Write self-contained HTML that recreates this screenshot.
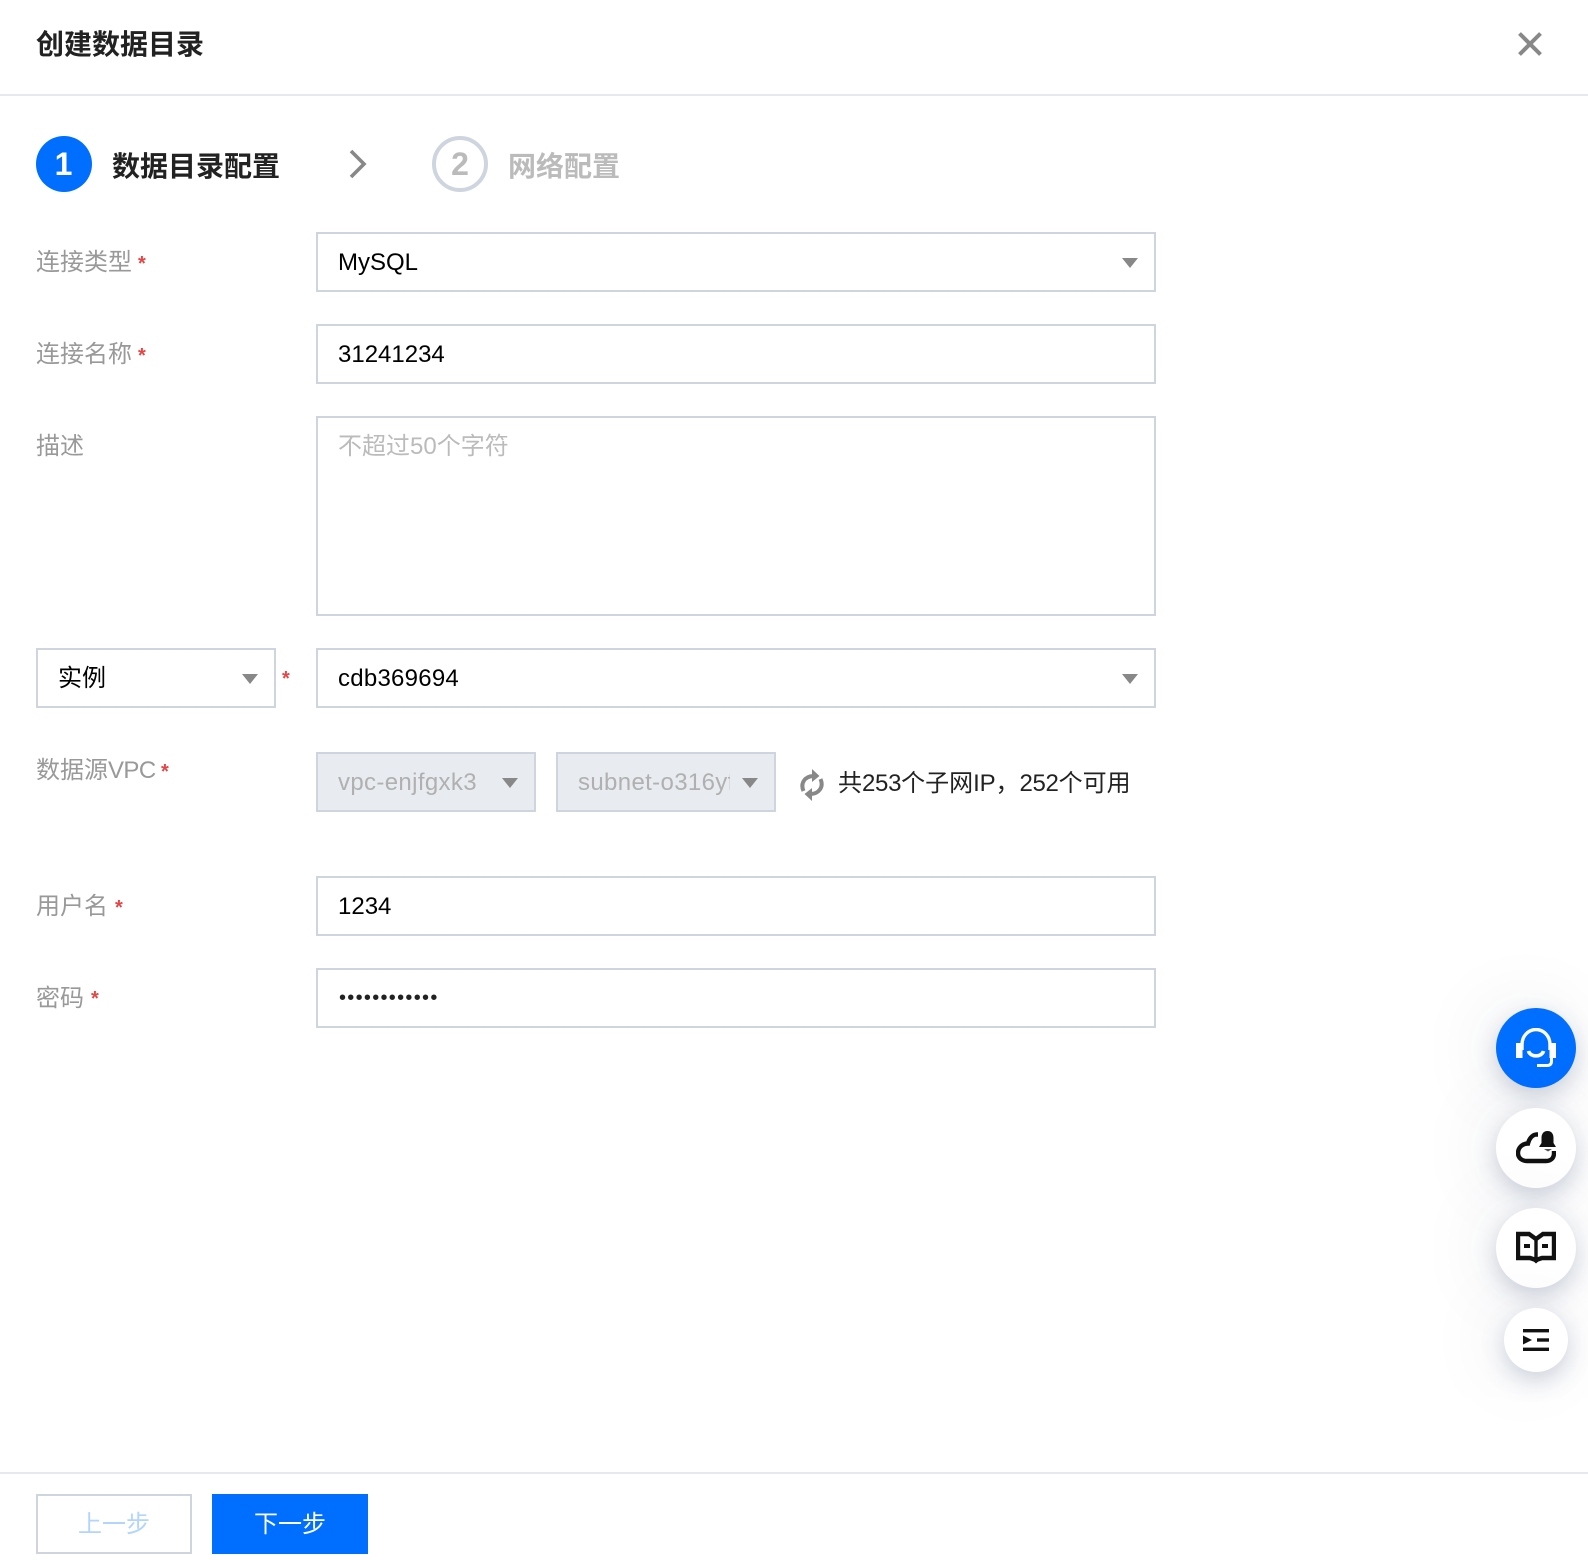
<!DOCTYPE html>
<html lang="zh-CN">
<head>
<meta charset="utf-8">
<title>创建数据目录</title>
<style>
html,body{margin:0;padding:0;background:#fff}
body{width:1588px;height:1560px;position:relative;overflow:hidden;font-family:"Liberation Sans","Noto Sans CJK SC",sans-serif;font-size:24px;color:#000}
.a{position:absolute;white-space:nowrap}
.box{position:absolute;box-sizing:border-box;border:2px solid #cfd5de;background:#fff;height:60px;left:316px;width:840px}
.txt{position:absolute;left:338px;line-height:36px;height:36px;white-space:nowrap}
.lab{position:absolute;left:36px;line-height:36px;color:#999;white-space:nowrap}
.star{position:absolute;color:#e54545;font-size:20px;line-height:24px;font-weight:bold}
.arr{position:absolute;width:0;height:0;border-left:8px solid transparent;border-right:8px solid transparent;border-top:10px solid #888}
.b{font-weight:bold;font-size:28px;line-height:40px}
.fab{position:absolute;border-radius:50%;background:#fff;box-shadow:0 8px 24px rgba(40,60,100,.22),-10px 0 80px rgba(40,60,100,.09)}
</style>
</head>
<body>
<div class="a b" style="left:36px;top:25px;color:#222">创建数据目录</div>
<svg class="a" style="left:1517px;top:31px" width="26" height="26" viewBox="0 0 26 26"><path d="M2.500 2.500L23.500 23.500M23.500 2.500L2.500 23.500" stroke="#888" stroke-width="4" fill="none"/></svg>
<div class="a" style="left:0;top:94px;width:1588px;height:2px;background:#e5e8ed"></div>

<div class="a" style="left:36px;top:136px;width:56px;height:56px;border-radius:50%;background:#006eff;color:#fff;font-weight:bold;font-size:32px;line-height:56px;text-align:center;text-indent:-1px">1</div>
<div class="a b" style="left:112px;top:147px;color:#222">数据目录配置</div>
<svg class="a" style="left:347px;top:148px" width="24" height="32" viewBox="0 0 24 32"><path d="M4 3L17 16L4 29" stroke="#888" stroke-width="3.600" fill="none"/></svg>
<div class="a" style="left:432px;top:136px;width:56px;height:56px;box-sizing:border-box;border:4px solid #cfd5de;border-radius:50%;color:#bbb;font-weight:bold;font-size:32px;line-height:48px;text-align:center">2</div>
<div class="a b" style="left:508px;top:147px;color:#bbb">网络配置</div>

<div class="lab" style="top:245px">连接类型</div><div class="star" style="left:138px;top:252px">*</div>
<div class="box" style="top:232px"></div><div class="txt" style="top:245px">MySQL</div>
<div class="arr" style="left:1122px;top:258px"></div>

<div class="lab" style="top:337px">连接名称</div><div class="star" style="left:138px;top:344px">*</div>
<div class="box" style="top:324px"></div><div class="txt" style="top:337px">31241234</div>

<div class="lab" style="top:429px">描述</div>
<div class="box" style="top:416px;height:200px"></div><div class="txt" style="top:429px;color:#bbb">不超过50个字符</div>

<div class="box" style="top:648px;left:36px;width:240px"></div><div class="txt" style="top:661px;left:58px">实例</div>
<div class="arr" style="left:242px;top:674px"></div>
<div class="star" style="left:282px;top:667px">*</div>
<div class="box" style="top:648px"></div><div class="txt" style="top:661px;letter-spacing:.25px">cdb369694</div>
<div class="arr" style="left:1122px;top:674px"></div>

<div class="lab" style="top:753px">数据源<span style="letter-spacing:-.6px">VPC</span></div><div class="star" style="left:161px;top:760px">*</div>
<div class="box" style="top:752px;width:220px;background:#e8ebf0"></div>
<div class="txt" style="top:765px;color:#b0b0b0;letter-spacing:.35px">vpc-enjfgxk3</div>
<div class="arr" style="left:502px;top:778px"></div>
<div class="box" style="top:752px;left:556px;width:220px;background:#e8ebf0"></div>
<div class="txt" style="top:765px;left:578px;width:152px;overflow:hidden;color:#b0b0b0;letter-spacing:.35px">subnet-o316yfxx</div>
<div class="arr" style="left:742px;top:778px"></div>
<svg class="a" style="left:800px;top:769px" width="24" height="32" viewBox="0 0 24 32"><g fill="none" stroke="#888" stroke-width="4"><path d="M3.500 22C0 14 5 7.500 13 7"/><path d="M20.500 10C24 18 19 24.500 11 25"/></g><path d="M12 0L19.500 7L12 13Z" fill="#888"/><path d="M12 32L4.500 25L12 19Z" fill="#888"/></svg>
<div class="a" style="left:838px;top:766px;line-height:36px;color:#222"><span>共</span><span style="letter-spacing:-.3px">253</span>个子网<span style="letter-spacing:-.2px">IP</span>，<span style="letter-spacing:-.3px">252</span>个可用</div>

<div class="lab" style="top:889px">用户名</div><div class="star" style="left:115px;top:896px">*</div>
<div class="box" style="top:876px"></div><div class="txt" style="top:889px">1234</div>

<div class="lab" style="top:981px">密码</div><div class="star" style="left:91px;top:987px">*</div>
<div class="box" style="top:968px"></div><div class="txt" style="top:980px;left:339px;font-size:20px;letter-spacing:1.300px;color:#222">••••••••••••</div>

<div class="a" style="left:0;top:1472px;width:1588px;height:2px;background:#e5e8ed"></div>
<div class="a" style="left:36px;top:1494px;width:156px;height:60px;box-sizing:border-box;border:2px solid #cfd5de;color:#b3d4ff;line-height:58px;text-align:center">上一步</div>
<div class="a" style="left:212px;top:1494px;width:156px;height:60px;background:#006eff;color:#fff;line-height:62px;text-align:center">下一步</div>

<div class="fab" style="left:1496px;top:1008px;width:80px;height:80px;background:#006eff"></div>
<svg class="a" style="left:1516px;top:1028px" width="40" height="40" viewBox="0 0 40 40"><path d="M6 22V16.500A14 15 0 0 1 34 16.500V22" fill="none" stroke="#fff" stroke-width="3.400"/><rect x="0" y="15" width="6.500" height="15" fill="#fff"/><rect x="33.500" y="15" width="6.500" height="15" fill="#fff"/><path d="M12.500 23C14 29.500 26 29.500 27.500 23" fill="none" stroke="#fff" stroke-width="3.600"/><path d="M35.500 29V33C35.500 36 34 37.500 31 37.500H21" fill="none" stroke="#fff" stroke-width="3"/></svg>

<div class="fab" style="left:1496px;top:1108px;width:80px;height:80px"></div>
<svg class="a" style="left:1516px;top:1128px" width="40" height="40" viewBox="0 0 40 40"><path d="M22 6.500H20C16 7 13 11 12 15.500C6 15.500 2 20 2 25C2 30 6 33 11 33H30C35 33 38 30 38 25V23" fill="none" stroke="#111" stroke-width="4.400"/><path d="M31.500 3C36 3 37.500 6.500 37.500 10V15L40 19H23L25.500 15V10C25.500 6.500 27 3 31.500 3Z" fill="#111"/><path d="M28 21H36L32 23.500Z" fill="#555"/></svg>

<div class="fab" style="left:1496px;top:1208px;width:80px;height:80px"></div>
<svg class="a" style="left:1516px;top:1228px" width="40" height="40" viewBox="0 0 40 40"><path d="M2 6H13L20 11L27 6H38V30H26L20 32L14 30H2Z" fill="none" stroke="#111" stroke-width="4.400"/><path d="M20 10V34" stroke="#111" stroke-width="3.400"/><path d="M15 31H25L20 35.500Z" fill="#111"/><rect x="8" y="16" width="6" height="4" fill="#111"/><rect x="26" y="16" width="6" height="4" fill="#111"/></svg>

<div class="fab" style="left:1504px;top:1308px;width:64px;height:64px"></div>
<svg class="a" style="left:1523px;top:1329px" width="26" height="22" viewBox="0 0 26 22"><rect x="0" y="0" width="26" height="3.400" fill="#111"/><rect x="14" y="9.300" width="12" height="3.400" fill="#111"/><path d="M0 6.500L9 11L0 15.500Z" fill="#111"/><rect x="0" y="18.600" width="26" height="3.400" fill="#111"/></svg>
</body>
</html>
